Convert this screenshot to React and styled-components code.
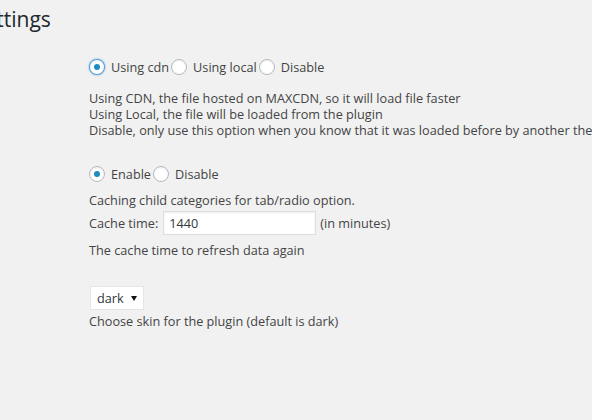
import styled, { createGlobalStyle } from "styled-components";

const Global = createGlobalStyle`
  html, body {
    margin: 0;
    background: #f1f1f1;
  }
  body {
    width: 592px;
    height: 420px;
    overflow: hidden;
    font-family: "Open Sans", "Liberation Sans", sans-serif;
    font-size: 12.7px;
    color: #444444;
  }
`;

const Page = styled.div`
  display: flex;
  flex-direction: column;
  padding-top: 5px;
`;

const Title = styled.h1`
  margin: 0 0 0 -27px;
  font-size: 21px;
  font-weight: 400;
  line-height: 29px;
  color: #23282d;
  white-space: nowrap;
`;

const Body = styled.div`
  display: flex;
  flex-direction: column;
  padding-left: 89px;
  white-space: nowrap;
`;

const RadioRow = styled.div`
  display: flex;
  align-items: center;
  height: 20px;
  margin-top: ${(p) => p.$top}px;
`;

const Radio = styled.span`
  box-sizing: border-box;
  width: 16px;
  height: 16px;
  border-radius: 50%;
  background: #ffffff;
  border: 1px solid ${(p) => (p.$focus ? "#5b9dd9" : "#b4b9be")};
  box-shadow: ${(p) =>
    p.$focus
      ? "0 0 2px rgba(30, 140, 190, 0.8)"
      : "inset 0 1px 2px rgba(0, 0, 0, 0.07)"};
  margin: 0 6px 0 ${(p) => (p.$first ? 0 : 2)}px;
  display: flex;
  align-items: center;
  justify-content: center;
  flex: none;

  &::before {
    content: "";
    display: ${(p) => (p.$checked ? "block" : "none")};
    width: 6px;
    height: 6px;
    border-radius: 50%;
    background: #1e8cbe;
  }
`;

const Label = styled.span`
  line-height: 20px;
`;

const Text = styled.div`
  line-height: 16px;
  margin-top: ${(p) => p.$top || 0}px;
`;

const FieldRow = styled.div`
  display: flex;
  align-items: center;
  margin-top: ${(p) => p.$top}px;
`;

const TextInput = styled.input`
  box-sizing: border-box;
  width: 153px;
  height: 24px;
  margin: 0 4px 0 5px;
  padding: 0 5px;
  border: 1px solid #dddddd;
  box-shadow: inset 0 1px 2px rgba(0, 0, 0, 0.07);
  background: #ffffff;
  font-family: "Open Sans", "Liberation Sans", sans-serif;
  font-size: 12.7px;
  color: #32373c;
  outline: none;
`;

const Select = styled.div`
  box-sizing: border-box;
  display: flex;
  align-items: center;
  justify-content: space-between;
  width: 54px;
  height: 24px;
  margin: ${(p) => p.$top}px 0 0 1px;
  padding: 0 6px 0 6px;
  background: #ffffff;
  border: 1px solid #e6e6e6;
  color: #32373c;
`;

const Caret = () => (
  <svg width="6" height="5" viewBox="0 0 6 5">
    <path d="M0 0 H6 L3 5 Z" fill="#111" />
  </svg>
);

export default function App() {
  return (
    <>
      <Global />
      <Page>
        <Title>Settings</Title>
        <Body>
          <RadioRow $top={23}>
            <Radio $first $checked $focus />
            <Label>Using cdn</Label>
            <Radio />
            <Label>Using local</Label>
            <Radio />
            <Label>Disable</Label>
          </RadioRow>
          <Text $top={13}>
            Using CDN, the file hosted on MAXCDN, so it will load file faster
          </Text>
          <Text>Using Local, the file will be loaded from the plugin</Text>
          <Text>
            Disable, only use this option when you know that it was loaded
            before by another theme or plugin
          </Text>

          <RadioRow $top={26}>
            <Radio $first $checked />
            <Label>Enable</Label>
            <Radio />
            <Label>Disable</Label>
          </RadioRow>
          <Text $top={8}>Caching child categories for tab/radio option.</Text>
          <FieldRow $top={3}>
            <Label>Cache time:</Label>
            <TextInput defaultValue="1440" />
            <Label>(in minutes)</Label>
          </FieldRow>
          <Text $top={7}>The cache time to refresh data again</Text>

          <Select $top={28}>
            <span>dark</span>
            <Caret />
          </Select>
          <Text $top={3}>Choose skin for the plugin (default is dark)</Text>
        </Body>
      </Page>
    </>
  );
}
